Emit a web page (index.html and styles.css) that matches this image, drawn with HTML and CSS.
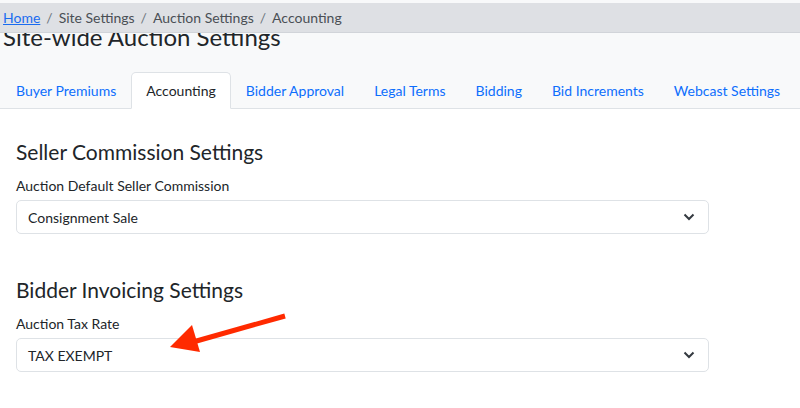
FILE: index.html
```html
<!DOCTYPE html>
<html lang="en">
	<head>
		<meta charset="UTF-8">
		<meta name="viewport" content="width=device-width, initial-scale=1.0">
		<title>Site-wide Auction Settings</title>
		<link rel="stylesheet" href="styles.css">
	</head>
	<body>
		<nav class="crumbs">
			<a href="#">Home</a>
			<span class="sep">/</span>
			<span>Site Settings</span>
			<span class="sep">/</span>
			<span>Auction Settings</span>
			<span class="sep">/</span>
			<span>Accounting</span>
		</nav>
		<h1 class="page-title">Site-wide Auction Settings</h1>
		<ul class="tabs">
			<li><a href="#">Buyer Premiums</a></li>
			<li class="active"><a href="#">Accounting</a></li>
			<li><a href="#">Bidder Approval</a></li>
			<li><a href="#">Legal Terms</a></li>
			<li><a href="#">Bidding</a></li>
			<li><a href="#">Bid Increments</a></li>
			<li><a href="#">Webcast Settings</a></li>
		</ul>
		<div class="tab-content">
			<section class="settings-group">
				<h2>Seller Commission Settings</h2>
				<label>Auction Default Seller Commission</label>
				<div class="select-box">
					<span>Consignment Sale</span>
					<svg width="12" height="8" viewBox="0 0 12 8"><path d="M1.5 1.5 L6 6 L10.5 1.5" fill="none" stroke="#343a40" stroke-width="2"/></svg>
				</div>
			</section>
			<section class="settings-group">
				<h2>Bidder Invoicing Settings</h2>
				<label>Auction Tax Rate</label>
				<div class="select-box">
					<span>TAX EXEMPT</span>
					<svg width="12" height="8" viewBox="0 0 12 8"><path d="M1.5 1.5 L6 6 L10.5 1.5" fill="none" stroke="#343a40" stroke-width="2"/></svg>
				</div>
			</section>
			<!-- pointer drawn over the tax rate field -->
			<svg class="pointer" width="130" height="45" viewBox="0 0 130 45">
				<line x1="120" y1="6" x2="28" y2="32" stroke="#ff2a00" stroke-width="5"/>
				<polygon points="5,37 27,15 35,42" fill="#ff2a00"/>
			</svg>
		</div>
	</body>
</html>
```

FILE: styles.css
```css
body {
	font-family: Lato, "Open Sans", sans-serif;
	background-color: #f8f9fa;
	color: #212529;
	margin: 0;
	overflow: hidden;
}
.crumbs {
	position: fixed;
	top: 3px;
	left: 0;
	right: 0;
	height: 29px;
	display: flex;
	align-items: center;
	gap: 6px;
	padding-left: 3px;
	font-size: 14px;
	color: #4a4f55;
	background: #dee0e4;
	border-bottom: 1px solid #d1d4d9;
	z-index: 2;
}
.crumbs a {
	color: #1a6cf0;
}
.crumbs .sep {
	color: #6c757d;
}
.page-title {
	font-size: 24px;
	font-weight: 400;
	margin: 0;
	padding: 22px 0 0 3px;
	line-height: 30px;
}
.tabs {
	list-style: none;
	display: flex;
	margin: 20px 0 0;
	padding: 0 0 0 1px;
	border-bottom: 1px solid #dee2e6;
	white-space: nowrap;
}
.tabs li {
	flex-shrink: 0;
	margin-bottom: -1px;
}
.tabs a {
	display: block;
	padding: 9px 14px 8px;
	font-size: 14px;
	line-height: 18px;
	color: #0d6efd;
	text-decoration: none;
	border: 1px solid transparent;
	border-radius: 5px 5px 0 0;
}
.tabs .active a {
	color: #212529;
	background: #fff;
	border-color: #dee2e6 #dee2e6 #fff;
}
.tab-content {
	position: relative;
	background: #fff;
	padding: 30px 91px 40px 16px;
}
.settings-group {
	margin-bottom: 43px;
}
.settings-group h2 {
	font-size: 21px;
	font-weight: 400;
	margin: 0 0 12px;
	line-height: 26px;
}
.settings-group label {
	display: block;
	font-size: 14px;
	margin-bottom: 6px;
}
.select-box {
	display: flex;
	align-items: center;
	justify-content: space-between;
	height: 32px;
	padding: 0 13px 0 11px;
	font-size: 14px;
	border: 1px solid #dee2e6;
	border-radius: 5px;
}
.pointer {
	position: absolute;
	left: 165px;
	top: 201px;
}
```
